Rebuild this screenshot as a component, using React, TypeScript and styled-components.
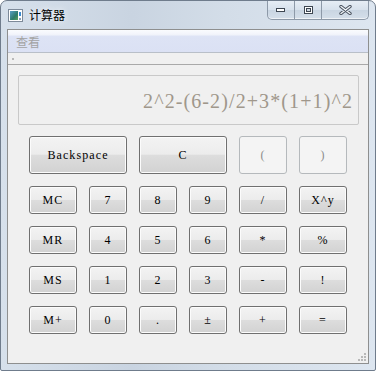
import React from "react";
import styled, { createGlobalStyle } from "styled-components";

const Global = createGlobalStyle`
  html, body { margin: 0; padding: 0; background: #ffffff; }
  #root { width: 376px; height: 371px; }
`;

const Window = styled.div`
  box-sizing: border-box;
  width: 376px;
  height: 371px;
  border: 1px solid #6f7c8c;
  border-radius: 7px 7px 2px 2px;
  background: linear-gradient(to right, #d6e0eb 0%, #c9d4e1 35%, #d3dde8 60%, #dde6f0 100%);
  display: flex;
  flex-direction: column;
  overflow: hidden;
`;

const TitleBar = styled.div`
  height: 28px;
  display: flex;
  align-items: flex-start;
`;

const TitleLeft = styled.div`
  display: flex;
  align-items: center;
  gap: 6px;
  padding: 7px 0 0 7px;
`;

const Title = styled.span`
  font-family: "Noto Sans CJK SC", "Microsoft YaHei", sans-serif;
  font-size: 12px;
  color: #000;
  line-height: 14px;
  text-shadow: 0 0 6px rgba(255, 255, 255, 0.9);
`;

const Caption = styled.div`
  margin-left: auto;
  margin-right: 6px;
  display: flex;
  height: 18px;
  border: 1px solid #8d99a8;
  border-top: none;
  border-radius: 0 0 5px 5px;
  overflow: hidden;
  background: linear-gradient(#e6edf5 0%, #d7e1ec 50%, #c9d5e2 51%, #d5dfea 100%);
  box-shadow: inset 0 -1px 0 rgba(255, 255, 255, 0.6);
`;

const CapBtn = styled.div<{ $w: number; $last?: boolean }>`
  width: ${(p) => p.$w}px;
  height: 18px;
  display: flex;
  align-items: center;
  justify-content: center;
  border-right: ${(p) => (p.$last ? "none" : "1px solid #8d99a8")};
`;

const Client = styled.div`
  flex: 1;
  margin: 0 6px 6px 6px;
  border: 1px solid #8e8f8f;
  background: #f0f0f0;
  display: flex;
  flex-direction: column;
  position: relative;
`;

const MenuBar = styled.div`
  height: 22px;
  border-bottom: 1px solid #b9bfc8;
  background: linear-gradient(#fafbfe 0%, #f2f4fb 20%, #dde3f5 30%, #dbe1f4 100%);
  display: flex;
  align-items: center;
  padding-left: 8px;
`;

const MenuItem = styled.span`
  font-family: "Noto Sans CJK SC", "Microsoft YaHei", sans-serif;
  font-size: 12px;
  color: #a3a3a3;
  line-height: 14px;
  padding-top: 2px;
`;

const ToolStrip = styled.div`
  height: 11px;
  border-bottom: 1px solid #a9a9a9;
  background: #f0f0f0;
  display: flex;
  align-items: center;
  padding-left: 4px;
`;

const Grip = styled.span`
  width: 2px;
  height: 2px;
  background: #b8b8b8;
`;

const Body = styled.div`
  padding: 10px 9px 0 10px;
  display: flex;
  flex-direction: column;
`;

const Display = styled.div`
  box-sizing: border-box;
  height: 50px;
  border: 1px solid #c9c9c9;
  border-radius: 2px;
  background: #f0f0f0;
  display: flex;
  align-items: center;
  justify-content: flex-end;
  padding: 3px 5px 0 0;
`;

const Expr = styled.span`
  font-family: "Liberation Serif", "Times New Roman", serif;
  font-size: 20px;
  letter-spacing: 1.1px;
  color: #9f978b;
  white-space: nowrap;
`;

const Keypad = styled.div`
  margin: 11px 0 0 11px;
  display: grid;
  grid-template-columns: 48px 38px 38px 38px 48px 48px;
  grid-template-rows: 38px 28px 28px 28px 28px;
  gap: 12px;
`;

const Key = styled.button<{ $span?: number; $disabled?: boolean }>`
  grid-column: span ${(p) => p.$span ?? 1};
  box-sizing: border-box;
  margin: 0;
  padding: 0;
  border: 1px solid ${(p) => (p.$disabled ? "#b5b9bc" : "#707070")};
  border-radius: 3px;
  background: ${(p) =>
    p.$disabled
      ? "#f4f4f4"
      : "linear-gradient(#f3f3f3 0%, #ececec 48%, #dddddd 50%, #d2d2d2 100%)"};
  box-shadow: ${(p) => (p.$disabled ? "none" : "inset 0 0 0 1px #fcfcfc")};
  font-family: "Liberation Serif", "Times New Roman", serif;
  font-weight: 400;
  font-size: 12px;
  letter-spacing: 1.1px;
  color: ${(p) => (p.$disabled ? "#8b8b8b" : "#000")};
  display: flex;
  align-items: center;
  justify-content: center;
  cursor: default;
`;

const SizeGrip = styled.svg`
  position: absolute;
  right: 2px;
  bottom: 2px;
`;

const AppIcon = () => (
  <svg width="15" height="13" viewBox="0 0 15 13">
    <rect x="0.5" y="0.5" width="14" height="12" fill="#ffffff" stroke="#7d8a99" />
    <rect x="2" y="2" width="8" height="9" fill="url(#g1)" />
    <rect x="11" y="3" width="2" height="4" fill="#3b8bd0" />
    <rect x="11" y="9" width="2" height="2" fill="#8aa0b8" />
    <defs>
      <linearGradient id="g1" x1="0" y1="0" x2="1" y2="1">
        <stop offset="0" stopColor="#5aa0c8" />
        <stop offset="0.6" stopColor="#2e7a6a" />
        <stop offset="1" stopColor="#56a05a" />
      </linearGradient>
    </defs>
  </svg>
);

const MinIcon = () => (
  <svg width="12" height="6" viewBox="0 0 12 6">
    <rect x="1.5" y="1.5" width="8" height="3" fill="#fff" stroke="#3d4652" />
  </svg>
);

const MaxIcon = () => (
  <svg width="11" height="10" viewBox="0 0 11 10">
    <rect x="1.5" y="1.5" width="8" height="7" fill="#fff" stroke="#3d4652" />
    <rect x="3.5" y="3.5" width="4" height="3" fill="#cdd6e0" stroke="#3d4652" />
  </svg>
);

const CloseIcon = () => (
  <svg width="13" height="10" viewBox="0 0 13 10">
    <path d="M2 1.5 L11 8.5 M11 1.5 L2 8.5" stroke="#4a5360" strokeWidth="3.4" strokeLinecap="round" />
    <path d="M2 1.5 L11 8.5 M11 1.5 L2 8.5" stroke="#eef2f6" strokeWidth="1.4" strokeLinecap="round" />
  </svg>
);

type K = { label: string; span?: number; disabled?: boolean };

const keys: K[] = [
  { label: "Backspace", span: 2 },
  { label: "C", span: 2 },
  { label: "(", disabled: true },
  { label: ")", disabled: true },
  { label: "MC" }, { label: "7" }, { label: "8" }, { label: "9" }, { label: "/" }, { label: "X^y" },
  { label: "MR" }, { label: "4" }, { label: "5" }, { label: "6" }, { label: "*" }, { label: "%" },
  { label: "MS" }, { label: "1" }, { label: "2" }, { label: "3" }, { label: "-" }, { label: "!" },
  { label: "M+" }, { label: "0" }, { label: "." }, { label: "±" }, { label: "+" }, { label: "=" },
];

export default function App() {
  return (
    <>
      <Global />
      <Window>
        <TitleBar>
          <TitleLeft>
            <AppIcon />
            <Title>计算器</Title>
          </TitleLeft>
          <Caption>
            <CapBtn $w={26}><MinIcon /></CapBtn>
            <CapBtn $w={26}><MaxIcon /></CapBtn>
            <CapBtn $w={46} $last><CloseIcon /></CapBtn>
          </Caption>
        </TitleBar>
        <Client>
          <MenuBar>
            <MenuItem>查看</MenuItem>
          </MenuBar>
          <ToolStrip>
            <Grip />
          </ToolStrip>
          <Body>
            <Display>
              <Expr>2^2-(6-2)/2+3*(1+1)^2</Expr>
            </Display>
            <Keypad>
              {keys.map((k, i) => (
                <Key key={i} $span={k.span} $disabled={k.disabled} disabled={k.disabled}>
                  {k.label}
                </Key>
              ))}
            </Keypad>
          </Body>
          <SizeGrip width="8" height="8" viewBox="0 0 8 8">
            {[[6, 0], [6, 3], [3, 3], [6, 6], [3, 6], [0, 6]].map(([x, y], i) => (
              <rect key={i} x={x} y={y} width="2" height="2" fill="#b8b8b8" />
            ))}
          </SizeGrip>
        </Client>
      </Window>
    </>
  );
}
